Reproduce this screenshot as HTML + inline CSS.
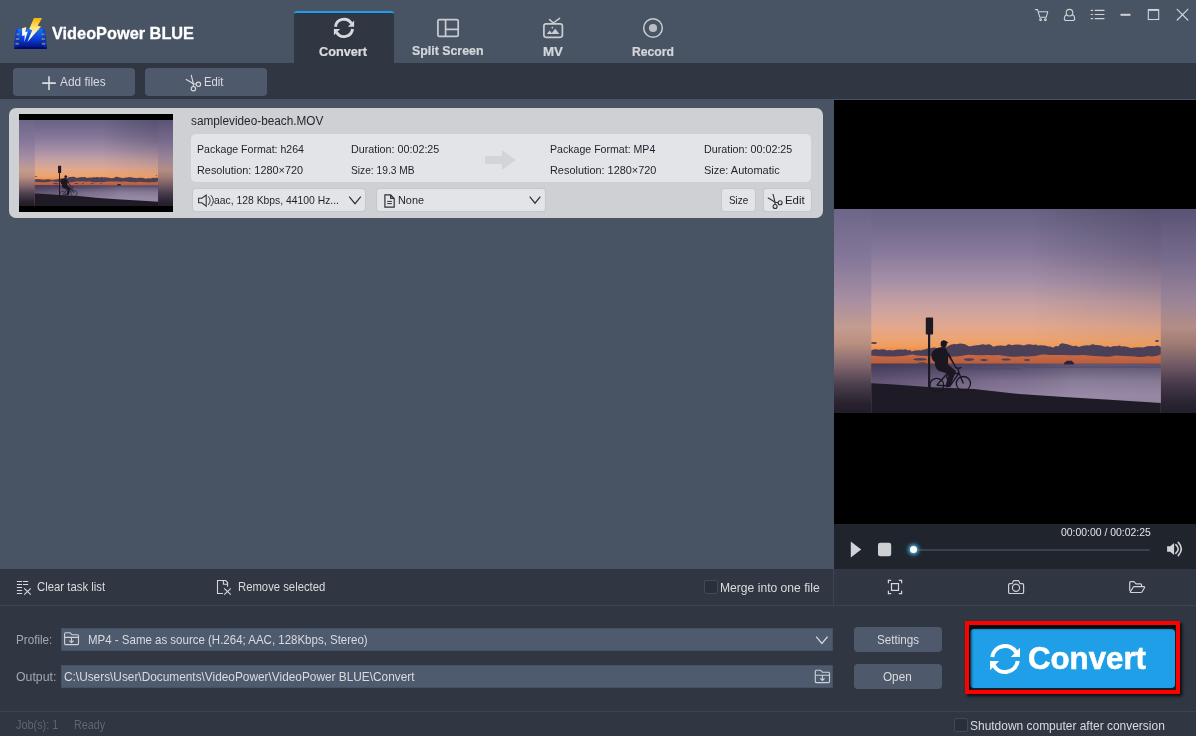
<!DOCTYPE html>
<html lang="en">
<head>
<meta charset="utf-8">
<title>VideoPower BLUE</title>
<style>
html,body{margin:0;padding:0;background:#303742;}
body{width:1196px;height:736px;overflow:hidden;font-family:"Liberation Sans",sans-serif;}
#app{position:relative;width:1196px;height:736px;overflow:hidden;background:#303742;}
.abs,.t,svg.i{position:absolute;}
.t{white-space:pre;transform-origin:0 50%;display:block;}
.grp{position:static;}
svg.i{overflow:visible;}
/* header */
#header{left:0;top:0;width:1196px;height:63px;background:#485363;}
#tab-active{left:294px;top:11px;width:100px;height:52px;background:#303742;border-top:2px solid #1e9fe8;border-radius:3px 3px 0 0;box-sizing:border-box;}
/* toolbar */
#toolbar{left:0;top:63px;width:1196px;height:36px;background:#303742;}
.tbtn{height:28px;width:122px;top:68px;background:#4e5a6c;border-radius:4px;}
/* list */
#list{left:0;top:99px;width:1196px;height:470px;background:#485363;}
#card{left:9px;top:108px;width:814px;height:110px;background:#cfd0d4;border-radius:7px;}
#thumb{left:19px;top:114px;width:154px;height:98px;background:#000;}
#info{left:191px;top:134px;width:620px;height:48px;background:#e3e4e8;border-radius:5px;}
.cbtn{top:189px;height:22px;background:#e3e4e8;border-radius:3px;box-shadow:0 0 0 1px rgba(190,192,198,.55);}
/* preview */
#preview{left:834px;top:100px;width:362px;height:424px;background:#000;}
#player{left:834px;top:524px;width:362px;height:45px;background:#1f242d;}
#track{left:913px;top:548.5px;width:237px;height:2px;background:#3a414c;border-radius:1px;}
#knob{left:909.7px;top:545.8px;width:7px;height:7px;border-radius:50%;background:#fff;box-shadow:0 0 3px 2px rgba(70,160,205,.85),0 0 6px 3px rgba(50,130,175,.3);}
/* bottom */
#bar1{left:0;top:569px;width:1196px;height:36px;background:#303742;border-bottom:1px solid #3b4451;}
#vsep{left:833px;top:569px;width:1px;height:36px;background:#3a4452;}
#bar2{left:0;top:606px;width:1196px;height:105px;background:#303742;border-bottom:1px solid #3b4451;}
#status{left:0;top:712px;width:1196px;height:24px;background:#303742;}
.chk{width:12px;height:12px;background:#2a303a;border:1px solid #414a58;border-radius:2px;}
.inp{left:60.5px;width:772.5px;height:23px;background:#4e5a6d;box-shadow:inset 0 0 0 1px #465162;}
.bbtn{left:854px;width:88px;height:25px;background:#4e5a6c;border-radius:4px;}
#hl{left:965px;top:621px;width:207px;height:65px;border:4px solid #ff0000;box-shadow:2px 2px 3px rgba(0,0,0,.8);background:#1b1f26;}
#hl-in{left:969px;top:625px;width:207px;height:65px;box-shadow:inset 2px 3px 3px rgba(0,0,0,.9);pointer-events:none;}
#convert{left:970px;top:629px;width:205px;height:59px;background:#1e9fe8;border-radius:4px;}
</style>
</head>
<body>
<svg width="0" height="0" style="position:absolute" aria-hidden="true">
  <defs>
    <linearGradient id="gSky" x1="0" y1="0" x2="0" y2="1">
      <stop offset="0" stop-color="#6a6386"/>
      <stop offset="0.055" stop-color="#6f6889"/>
      <stop offset="0.2" stop-color="#857799"/>
      <stop offset="0.35" stop-color="#a58fa7"/>
      <stop offset="0.47" stop-color="#c7a1a2"/>
      <stop offset="0.574" stop-color="#e1a88f"/>
      <stop offset="0.645" stop-color="#eda36e"/>
      <stop offset="0.675" stop-color="#f19b59"/>
      <stop offset="0.70" stop-color="#e6864a"/>
      <stop offset="0.72" stop-color="#c96842"/>
      <stop offset="0.76" stop-color="#b65d3c"/>
      <stop offset="1" stop-color="#b65d3c"/>
    </linearGradient>
    <linearGradient id="gShade" x1="0" y1="0" x2="1" y2="0">
      <stop offset="0" stop-color="#000" stop-opacity="0"/>
      <stop offset="0.55" stop-color="#000" stop-opacity="0"/>
      <stop offset="1" stop-color="#1a1430" stop-opacity="0.22"/>
    </linearGradient>
    <linearGradient id="gSea" x1="0" y1="0" x2="0" y2="1">
      <stop offset="0" stop-color="#4f4563"/>
      <stop offset="0.12" stop-color="#5f5474"/>
      <stop offset="0.35" stop-color="#7f718f"/>
      <stop offset="0.65" stop-color="#9081a0"/>
      <stop offset="1" stop-color="#86778f"/>
    </linearGradient>
    <linearGradient id="gSeaX" x1="0" y1="0" x2="1" y2="0">
      <stop offset="0" stop-color="#2c2440" stop-opacity="0.38"/>
      <stop offset="0.45" stop-color="#2c2440" stop-opacity="0.04"/>
      <stop offset="0.7" stop-color="#fff" stop-opacity="0.08"/>
      <stop offset="1" stop-color="#fff" stop-opacity="0.06"/>
    </linearGradient>
    <linearGradient id="gSideL" x1="0" y1="0" x2="0" y2="1">
      <stop offset="0" stop-color="#6d6688"/>
      <stop offset="0.25" stop-color="#85789a"/>
      <stop offset="0.45" stop-color="#a88fa2"/>
      <stop offset="0.58" stop-color="#c49c90"/>
      <stop offset="0.66" stop-color="#b98f80"/>
      <stop offset="0.76" stop-color="#86696f"/>
      <stop offset="0.86" stop-color="#4c3f4e"/>
      <stop offset="0.95" stop-color="#29232f"/>
      <stop offset="1" stop-color="#211c28"/>
    </linearGradient>
    <linearGradient id="gSideR" x1="0" y1="0" x2="0" y2="1">
      <stop offset="0" stop-color="#5a5375"/>
      <stop offset="0.25" stop-color="#786c8d"/>
      <stop offset="0.45" stop-color="#9b8498"/>
      <stop offset="0.58" stop-color="#b38d86"/>
      <stop offset="0.66" stop-color="#a07c74"/>
      <stop offset="0.76" stop-color="#735b65"/>
      <stop offset="0.86" stop-color="#45394a"/>
      <stop offset="0.95" stop-color="#2a2432"/>
      <stop offset="1" stop-color="#231e2b"/>
    </linearGradient>
    <linearGradient id="gFade" x1="0" y1="0" x2="0" y2="1"><stop offset="0" stop-color="#fff"/><stop offset="0.35" stop-color="#ddd"/><stop offset="1" stop-color="#000"/></linearGradient>
    <mask id="mFade" maskUnits="userSpaceOnUse" x="0" y="0" width="362" height="204"><rect x="0" y="0" width="362" height="150" fill="url(#gFade)"/></mask>
    <filter id="fSoft" x="-5%" y="-20%" width="110%" height="140%"><feGaussianBlur stdDeviation="0.7"/></filter>
    <symbol id="scene" viewBox="0 0 362 204" preserveAspectRatio="none">
      <rect x="0" y="0" width="38" height="204" fill="url(#gSideL)"/>
      <rect x="326" y="0" width="36" height="204" fill="url(#gSideR)"/>
      <!-- sharp centre -->
      <rect x="37.3" y="0" width="289.5" height="204" fill="url(#gSky)"/>
      <rect x="37.3" y="0" width="289.5" height="150" fill="url(#gShade)" mask="url(#mFade)"/>
      <!-- sea -->
      <rect x="37.3" y="154.6" width="289.5" height="49.4" fill="url(#gSea)"/>
      <rect x="37.3" y="154.6" width="289.5" height="49.4" fill="url(#gSeaX)"/>
      <rect x="37.3" y="158.8" width="150" height="1.6" fill="#4f4566" opacity="0.55"/>
      <rect x="190" y="157.2" width="136.8" height="1.8" fill="#4f4566" opacity="0.5"/>
      <!-- clouds -->
      <g fill="#4b3f59" filter="url(#fSoft)">
        <path d="M37.3 143.0 L37.3 141.5 Q41.2 139.3 45.1 140.8 Q49.1 139.6 53.0 141.4 Q55.6 140.3 58.3 141.6 Q63.8 140.3 69.3 140.7 Q71.5 139.6 73.7 141.6 Q75.6 140.0 77.6 142.4 Q82.4 141.0 87.3 141.4 Q89.1 140.1 90.9 140.5 Q93.6 138.9 96.2 139.2 Q100.2 137.6 104.1 139.5 Q108.4 136.9 112.6 138.1 Q117.5 134.3 122.4 135.3 Q128.9 133.0 135.3 137.6 Q140.5 136.0 145.6 136.0 Q148.7 134.8 151.8 135.9 Q155.5 134.0 159.1 137.7 Q165.4 135.7 171.7 136.9 Q174.5 133.8 177.2 136.2 Q183.6 134.5 190.0 136.4 Q194.8 134.3 199.5 136.1 Q201.7 134.7 203.8 136.4 Q209.2 135.6 214.5 137.5 Q216.8 137.3 219.0 138.7 Q221.6 136.3 224.2 137.4 Q226.8 133.4 229.5 134.6 Q234.3 135.5 239.1 137.2 Q241.9 136.2 244.6 138.0 Q250.2 135.8 255.8 136.5 Q258.5 134.2 261.3 136.0 Q266.1 135.4 270.9 137.8 Q273.6 136.5 276.4 138.2 Q279.7 136.5 283.0 137.3 Q285.2 135.6 287.4 137.4 Q292.0 136.7 296.6 139.1 Q302.9 137.7 309.2 138.5 Q315.1 136.4 320.9 137.3 Q323.9 135.4 326.8 138.0 L326.8 145.4 Q320.3 148.5 313.8 147.1 Q307.2 148.9 300.6 147.5 Q290.8 146.8 281.0 146.4 Q275.7 148.1 270.3 147.5 Q259.7 147.3 249.1 146.0 Q239.3 146.6 229.5 146.1 Q218.8 146.2 208.0 145.6 Q198.5 148.3 189.0 147.3 Q181.8 148.0 174.6 147.4 Q169.4 146.9 164.3 146.1 Q158.8 146.6 153.3 145.9 Q143.8 146.5 134.2 145.8 Q122.1 148.6 109.9 147.6 Q99.4 147.2 88.9 146.7 Q83.6 146.9 78.3 145.5 Q67.7 147.8 57.1 147.5 Q47.0 147.7 37.3 146.5 L37.3 147.4 Z"/>
        <ellipse cx="86" cy="150.300" rx="7" ry="1.300"/>
        <ellipse cx="135" cy="150.600" rx="5" ry="1.300"/>
        <ellipse cx="150" cy="151" rx="3.500" ry="1"/>
        <ellipse cx="172" cy="150.500" rx="4.500" ry="1.100"/>
        <ellipse cx="193" cy="151" rx="3" ry=".9"/>
        <ellipse cx="40" cy="134" rx="3" ry="1"/>
        <ellipse cx="323" cy="132" rx="2" ry="1"/>
      </g>
      <!-- ships -->
      <path d="M230 155.600 L230.600 153 L232 153 L232.300 151.800 L238 151.800 L238.500 153 L239.500 153 L240 155.600 Z" fill="#2b2236"/>
      <path d="M83.500 154.600 L85 153.400 L91 153.400 L93 154.600 Z" fill="#43364c"/>
      <!-- beach -->
      <path d="M37.3 174.200 L60 175.500 L94 178 L140 180 L180 184.500 L230 188 L280 191 L326.800 194 L326.800 204 L37.3 204 Z" fill="#1e1a26"/>
      <!-- sign + pole -->
      <rect x="94" y="124" width="2.2" height="54" fill="#1d1925"/>
      <rect x="91.800" y="108.600" width="7.300" height="17" rx="0.800" fill="#1d1925"/>
      <!-- bike -->
      <g fill="none" stroke="#1b1722" stroke-width="1.300">
        <circle cx="102.800" cy="176.200" r="6.900"/>
        <circle cx="129.400" cy="174.600" r="7.100"/>
        <path d="M102.800 176.200 L112 166 L125 164 L129.400 174.600 M112 166 L116 177 L125 164 M125 164 L124 159.500 L121 158 M124 159.500 L127.500 158.400 M102.800 176.200 L116 177" stroke-width="1.400"/>
      </g>
      <!-- rider -->
      <g fill="#1b1722">
        <ellipse cx="109.700" cy="134.900" rx="3.100" ry="3.400"/>
        <path d="M107.500 132.400 Q110 130.400 112.600 132.600 L114.700 133.900 L111.800 134.500 Z"/>
        <path d="M101.500 140 Q105.500 137.300 110.500 138.600 Q113.600 140.500 114.200 146 L114 155.500 L118 158.800 L122 162.200 L120 167.500 L116 177.500 L112.500 178.500 L111.500 176.200 L114.500 166.500 L111.500 164 L104.500 161.800 Q100.500 158.500 100.800 153 Q96.800 150.500 97.500 145 Q98.300 141.500 101.500 140 Z"/>
        <path d="M113.500 146 L121 158.200 L122 157.600 L114.600 143.500 Z"/>
      </g>
    </symbol>
  </defs>
</svg>

<div id="app">

  <header class="grp">
    <div id="header" class="abs"></div>
    <svg class="i" id="logo" style="left:12px;top:14px" width="38" height="38" viewBox="12 14 38 38">
      <defs>
        <linearGradient id="gFilm" x1="0" y1="0" x2="0" y2="1"><stop offset="0" stop-color="#1c74f5"/><stop offset="0.45" stop-color="#0d43dc"/><stop offset="1" stop-color="#020a72"/></linearGradient>
        <linearGradient id="gBolt" x1="0" y1="0" x2="0" y2="1"><stop offset="0" stop-color="#f5b400"/><stop offset="0.4" stop-color="#ffe27a"/><stop offset="0.75" stop-color="#fffbe8"/><stop offset="1" stop-color="#ffffff"/></linearGradient>
        <linearGradient id="gBolt2" x1="0" y1="0" x2="0" y2="1"><stop offset="0" stop-color="#ffe9a8"/><stop offset="0.5" stop-color="#ffffff"/><stop offset="1" stop-color="#ffffff"/></linearGradient>
      </defs>
      <path d="M15.800 28.700 L44.900 28.700 L46.900 49 L14.100 49 Z" fill="url(#gFilm)"/>
      <path d="M15.800 28.700 L18.200 28.700 L17.200 49 L14.100 49 Z M42.500 28.700 L44.900 28.700 L46.900 49 L43.800 49 Z" fill="#0a2fb0" opacity=".55"/>
      <g fill="#6f7b90">
        <rect x="16.300" y="33.200" width="3.200" height="2" rx=".5"/><rect x="15.900" y="37.900" width="3.300" height="2" rx=".5"/><rect x="15.500" y="42.700" width="3.400" height="2.100" rx=".5"/>
        <rect x="41.300" y="33.200" width="3.200" height="2" rx=".5"/><rect x="41.600" y="37.900" width="3.300" height="2" rx=".5"/><rect x="41.900" y="42.700" width="3.400" height="2.100" rx=".5"/>
      </g>
      <path d="M14.100 47.300 H46.900 V49 H14.100 Z" fill="#01064f" opacity=".6"/>
      <path d="M33.900 18 L42.100 18 L37.700 25.700 L41.100 26.400 L27.400 41.900 L32.200 30.300 L29.200 29 Z" fill="url(#gBolt)"/>
      <path d="M22 28.300 L26.300 26.900 L25.400 32 L27.800 31.600 L24.400 42 L24.700 35.300 L22.200 36 Z" fill="url(#gBolt2)"/>
    </svg>
    <h1 class="grp" style="margin:0"><span class="t" style="left:51.8px;top:24.20px;font-size:17px;line-height:20px;font-weight:bold;color:#ffffff;transform:scaleX(0.9595);-webkit-text-stroke:0.31px #ffffff">VideoPower BLUE</span></h1>
    <nav class="grp">
      <div id="tab-active" class="abs"></div>
      <div class="grp tab">
        <svg class="i" style="left:332px;top:16px" width="24" height="24" viewBox="332 16 24 24"><path d="M335.42 26.8 A8.65 8.65 0 0 1 351.49 23.57 M352.58 29 A8.65 8.65 0 0 1 336.51 32.22" fill="none" stroke="#d8d9dc" stroke-width="2.9"/><path d="M354.1 20.6 V26.8 H347.9 Z M333.9 29 V35.2 L340.1 29 Z" fill="#d8d9dc"/></svg>
        <span class="t" style="left:319.3px;top:43.50px;font-size:13px;line-height:16px;font-weight:bold;color:#dcdde0;transform:scaleX(0.9771);-webkit-text-stroke:0.23px #dcdde0">Convert</span>
      </div>
      <div class="grp tab">
        <svg class="i" style="left:436px;top:18px" width="24" height="20" viewBox="436 18 24 20" fill="none" stroke="#c9ccd1" stroke-width="1.700">
          <rect x="437.900" y="19.700" width="20.300" height="16.700" rx="1.500"/>
          <path d="M445.600 19.700 V36.400 M445.600 29.300 H458.200"/>
        </svg>
        <span class="t" style="left:412.3px;top:42.50px;font-size:13px;line-height:16px;font-weight:bold;color:#d4d6da;transform:scaleX(0.9515);-webkit-text-stroke:0.23px #d4d6da">Split Screen</span>
      </div>
      <div class="grp tab">
        <svg class="i" style="left:542px;top:16px" width="24" height="24" viewBox="542 16 24 24" fill="none" stroke="#c9ccd1" stroke-width="1.700" stroke-linecap="round">
          <rect x="543.900" y="23.800" width="18.500" height="13.500" rx="2.200"/>
          <path d="M553.300 23 L549.600 19.600 M553.300 23 L559.600 18.300" stroke-width="1.500"/>
          <path d="M546.800 34 L549.600 30.400 L551.800 33 L555.200 28.800 L559.400 34 Z" fill="#c9ccd1" stroke="none"/>
          <circle cx="552.400" cy="27.600" r=".9" fill="#c9ccd1" stroke="none"/>
        </svg>
        <span class="t" style="left:542.8px;top:43.50px;font-size:13px;line-height:16px;font-weight:bold;color:#d4d6da;transform:scaleX(1.0256);-webkit-text-stroke:0.23px #d4d6da">MV</span>
      </div>
      <div class="grp tab">
        <svg class="i" style="left:642px;top:17px" width="22" height="22" viewBox="642 17 22 22">
          <circle cx="653" cy="28" r="9.300" fill="none" stroke="#c9ccd1" stroke-width="1.500"/>
          <circle cx="653" cy="28" r="4.100" fill="#babdc4"/>
        </svg>
        <span class="t" style="left:631.6px;top:43.50px;font-size:13px;line-height:16px;font-weight:bold;color:#d4d6da;transform:scaleX(0.9376);-webkit-text-stroke:0.23px #d4d6da">Record</span>
      </div>
    </nav>
    <div class="grp" id="winctl">
      <svg class="i" style="left:1030px;top:6px" width="162" height="18" viewBox="1030 6 162 18" fill="none" stroke="#d0d2d6" stroke-width="1.100" stroke-linecap="round" stroke-linejoin="round">
        <!-- cart -->
        <path d="M1035.400 9.600 L1037.600 9.600 L1039.800 17.300 L1046.200 17.300 L1047.700 11.800 L1038.300 11.800"/>
        <circle cx="1040.600" cy="19.700" r=".9"/><circle cx="1045.400" cy="19.700" r=".9"/>
        <!-- user -->
        <circle cx="1069.500" cy="12.700" r="3.300"/>
        <path d="M1066.700 14.600 Q1064.300 16 1064.300 18.400 Q1064.300 20.500 1066.400 20.500 L1072.600 20.500 Q1074.700 20.500 1074.700 18.400 Q1074.700 16 1072.300 14.600"/>
        <!-- list -->
        <path d="M1095.200 10.400 H1104 M1095.200 14.500 H1104 M1095.200 18.700 H1104" stroke-width="1.200"/>
        <path d="M1091.200 10.400 H1092.600 M1091.200 14.500 H1092.600 M1091.200 18.700 H1092.600" stroke-width="1.200"/>
        <!-- minimize -->
        <path d="M1120.500 14.800 H1130.500" stroke-width="2" stroke-linecap="butt"/>
        <!-- maximize -->
        <rect x="1148.300" y="9.800" width="10.400" height="9.700" stroke-linejoin="miter"/>
        <path d="M1148.300 9.900 H1158.700" stroke-width="1.900" stroke-linecap="butt"/>
        <!-- close -->
        <path d="M1177.200 9.300 L1187.800 20 M1187.800 9.300 L1177.200 20" stroke-width="1.200"/>
      </svg>
    </div>
  </header>

  <section class="grp" id="tools">
    <div id="toolbar" class="abs"></div>
    <div class="grp">
      <div class="abs tbtn" style="left:13px"></div>
      <svg class="i" style="left:41px;top:75px" width="16" height="16" viewBox="41 75 16 16" stroke="#dcdde0" stroke-width="1.600" fill="none"><path d="M42.200 83.100 H55.800 M49 76.200 V90"/></svg>
      <span class="t" style="left:60.4px;top:74.00px;font-size:12.7px;line-height:16px;font-weight:normal;color:#d9dbde;transform:scaleX(0.9369)">Add files</span>
    </div>
    <div class="grp">
      <div class="abs tbtn" style="left:145px"></div>
      <svg class="i" style="left:184px;top:73px" width="20" height="20" viewBox="184 73 20 20" stroke="#dcdde0" stroke-width="1.100" fill="none" stroke-linecap="round">
        <path d="M191.300 75.400 Q192.500 80 193.300 83.700 L193.400 86.400"/>
        <path d="M186.200 79.400 Q190 81.400 193.300 83.700 L196.200 84.200"/>
        <circle cx="193.400" cy="88.700" r="2.200"/><circle cx="198.400" cy="84.300" r="2.200"/>
      </svg>
      <span class="t" style="left:203.7px;top:74.00px;font-size:12.7px;line-height:16px;font-weight:normal;color:#d9dbde;transform:scaleX(0.8869)">Edit</span>
    </div>
  </section>

  <main class="grp">
    <div id="list" class="abs"></div>
    <article class="grp">
      <div id="card" class="abs"></div>
      <div id="thumb" class="abs"></div>
      <svg class="i" style="left:19px;top:120px" width="154" height="86"><use href="#scene" width="154" height="86"/></svg>
      <span class="t" style="left:191.4px;top:113.00px;font-size:12px;line-height:16px;font-weight:normal;color:#211f2d;transform:scaleX(0.9827)">samplevideo-beach.MOV</span>
      <div id="info" class="abs"></div>
      <span class="t" style="left:197.0px;top:141.20px;font-size:11.3px;line-height:16px;font-weight:normal;color:#211f2d;transform:scaleX(0.9362)">Package Format: h264</span><span class="t" style="left:197.0px;top:161.90px;font-size:11.3px;line-height:16px;font-weight:normal;color:#211f2d;transform:scaleX(0.9616)">Resolution: 1280×720</span><span class="t" style="left:350.9px;top:141.20px;font-size:11.3px;line-height:16px;font-weight:normal;color:#211f2d;transform:scaleX(0.9499)">Duration: 00:02:25</span><span class="t" style="left:350.9px;top:161.90px;font-size:11.3px;line-height:16px;font-weight:normal;color:#211f2d;transform:scaleX(0.9043)">Size: 19.3 MB</span>
      <svg class="i" style="left:484px;top:149px" width="34" height="22" viewBox="484 149 34 22"><path d="M485 156.100 H501.900 V150.200 L516.200 160 L501.900 169.800 V164 H485 Z" fill="#d3d4d8"/></svg>
      <span class="t" style="left:549.7px;top:141.20px;font-size:11.3px;line-height:16px;font-weight:normal;color:#211f2d;transform:scaleX(0.9369)">Package Format: MP4</span><span class="t" style="left:549.7px;top:161.90px;font-size:11.3px;line-height:16px;font-weight:normal;color:#211f2d;transform:scaleX(0.9652)">Resolution: 1280×720</span><span class="t" style="left:703.7px;top:141.20px;font-size:11.3px;line-height:16px;font-weight:normal;color:#211f2d;transform:scaleX(0.9499)">Duration: 00:02:25</span><span class="t" style="left:703.7px;top:161.90px;font-size:11.3px;line-height:16px;font-weight:normal;color:#211f2d;transform:scaleX(0.9723)">Size: Automatic</span>
      <div class="grp">
        <div class="abs cbtn" style="left:193px;width:172px"></div>
        <svg class="i" style="left:196px;top:192px" width="20" height="16" viewBox="196 192 20 16" fill="none" stroke="#2e313b" stroke-width="1.100" stroke-linejoin="miter">
          <path d="M198.600 198.300 H201.800 L206.200 195 V206.200 L201.800 202.800 H198.600 Z"/>
          <path d="M208.200 196.300 Q212 200.600 208.200 204.900 M210.800 195.100 Q216 200.600 210.800 206.100" stroke-width="1"/>
        </svg>
        <span class="t" style="left:214.4px;top:191.80px;font-size:11.3px;line-height:16px;font-weight:normal;color:#211f2d;transform:scaleX(0.9172)">aac, 128 Kbps, 44100 Hz...</span>
        <svg class="i" style="left:347px;top:194px" width="16" height="12" viewBox="347 194 16 12" fill="none" stroke="#2e313b" stroke-width="1.200"><path d="M349.200 196.700 L355 203.700 L360.800 196.700"/></svg>
      </div>
      <div class="grp">
        <div class="abs cbtn" style="left:377px;width:168px"></div>
        <svg class="i" style="left:382px;top:192px" width="16" height="18" viewBox="382 192 16 18" fill="none" stroke="#2e313b" stroke-width="1.200" stroke-linejoin="miter">
          <path d="M384.900 194.800 H390.600 L394.200 198.400 V207.200 H384.900 Z M390.600 194.800 V198.400 H394.200"/>
          <path d="M387.200 201.400 H391.900 M387.200 203.600 H391.900" stroke-width="1"/>
        </svg>
        <span class="t" style="left:397.7px;top:191.80px;font-size:11.3px;line-height:16px;font-weight:normal;color:#211f2d;transform:scaleX(0.9624)">None</span>
        <svg class="i" style="left:527px;top:194px" width="16" height="12" viewBox="527 194 16 12" fill="none" stroke="#2e313b" stroke-width="1.200"><path d="M529.700 196.600 L535 203.200 L540.300 196.600"/></svg>
      </div>
      <div class="grp">
        <div class="abs cbtn" style="left:722px;width:32.500px"></div>
        <span class="t" style="left:728.9px;top:191.80px;font-size:11.3px;line-height:16px;font-weight:normal;color:#211f2d;transform:scaleX(0.8779)">Size</span>
      </div>
      <div class="grp">
        <div class="abs cbtn" style="left:764px;width:47px"></div>
        <svg class="i" style="left:766px;top:192px" width="20" height="18" viewBox="766 192 20 18" stroke="#2e313b" stroke-width="1.100" fill="none" stroke-linecap="round">
          <path d="M773 194.200 Q774.200 198.600 775 202.200 L775.100 204.500"/>
          <path d="M768.200 198 Q771.800 200 775 202.200 L778 202.700"/>
          <circle cx="775.100" cy="206.500" r="2"/><circle cx="780.100" cy="202.800" r="2"/>
        </svg>
        <span class="t" style="left:784.5px;top:191.80px;font-size:11.3px;line-height:16px;font-weight:normal;color:#211f2d;transform:scaleX(1.0119)">Edit</span>
      </div>
    </article>
  </main>

  <aside class="grp">
    <div id="preview" class="abs"></div>
    <svg class="i" style="left:834px;top:209px" width="362" height="204"><use href="#scene" width="362" height="204"/></svg>
    <div id="player" class="abs"></div>
    <svg class="i" style="left:848px;top:540px" width="46" height="20" viewBox="848 540 46 20">
      <path d="M850.800 541.600 L861.200 549.400 L850.800 557.400 Z" fill="#d2d3d6"/>
      <rect x="878" y="542.800" width="13.200" height="13.400" rx="2.200" fill="#cfd0d4"/>
    </svg>
    <div id="track" class="abs"></div>
    <div id="knob" class="abs"></div>
    <span class="t" style="left:1061.1px;top:524.40px;font-size:11px;line-height:16px;font-weight:normal;color:#e4e5e7;transform:scaleX(0.9471)">00:00:00 / 00:02:25</span>
    <svg class="i" style="left:1165px;top:540px" width="20" height="18" viewBox="1165 540 20 18" fill="#d2d3d6">
      <path d="M1167.100 546.200 H1170.200 L1174.100 542.900 V555 L1170.200 551.700 H1167.100 Z"/>
      <path d="M1175.800 544.700 Q1180.700 549 1175.800 553.300 M1178.300 542.400 Q1184.300 549 1178.300 555.600" fill="none" stroke="#d2d3d6" stroke-width="1.600" stroke-linecap="round"/>
    </svg>
  </aside>

  <section class="grp" id="actions">
    <div id="bar1" class="abs"></div>
    <div id="vsep" class="abs"></div>
    <svg class="i" style="left:15px;top:579px" width="18" height="18" viewBox="15 579 18 18" stroke="#d6d8dc" stroke-width="1" fill="none">
      <path d="M16.900 581.500 H22.100 M23 581.500 H28.200 M16.900 584.500 H22.100 M23 584.500 H28.200 M16.900 587.500 H22.100 M16.900 590.500 H22.100 M16.900 593.500 H22.100"/>
      <path d="M24.200 588.300 L30.800 594.700 M30.800 588.300 L24.200 594.700" stroke-width="1.100"/>
    </svg>
    <span class="t" style="left:36.6px;top:579.00px;font-size:12.7px;line-height:16px;font-weight:normal;color:#d9dbde;transform:scaleX(0.8955)">Clear task list</span>
    <svg class="i" style="left:215px;top:578px" width="18" height="18" viewBox="215 578 18 18" stroke="#d6d8dc" stroke-width="1.100" fill="none">
      <path d="M223 593.500 H217.500 V580.500 H225.600 L227.600 582.500 V586.800 M223.400 580.500 V584.200 H227.600"/>
      <path d="M224.200 588.300 L230.800 594.700 M230.800 588.300 L224.200 594.700"/>
    </svg>
    <span class="t" style="left:237.6px;top:579.00px;font-size:12.7px;line-height:16px;font-weight:normal;color:#d9dbde;transform:scaleX(0.8905)">Remove selected</span>
    <div class="abs chk" style="left:704px;top:580px"></div>
    <span class="t" style="left:719.6px;top:580.00px;font-size:12.7px;line-height:16px;font-weight:normal;color:#d9dbde;transform:scaleX(0.9551)">Merge into one file</span>
    <svg class="i" style="left:886px;top:578px" width="18" height="18" viewBox="886 578 18 18" stroke="#d6d8dc" stroke-width="1.200" fill="none">
      <path d="M888.400 583.200 V580.400 H891.200 M898.800 580.400 H901.600 V583.200 M901.600 590.800 V593.600 H898.800 M891.200 593.600 H888.400 V590.800"/>
      <rect x="891.500" y="583.600" width="7" height="6.800"/>
    </svg>
    <svg class="i" style="left:1006px;top:578px" width="20" height="18" viewBox="1006 578 20 18" stroke="#d0d2d6" stroke-width="1.200" fill="none" stroke-linejoin="round">
      <path d="M1008.600 585 Q1008.600 583.700 1009.900 583.700 H1011.600 Q1012.300 583.700 1012.600 582.900 L1013 581.600 Q1013.400 580.600 1014.400 580.600 H1017.800 Q1018.800 580.600 1019.200 581.600 L1019.600 582.900 Q1019.900 583.700 1020.600 583.700 H1022.300 Q1023.600 583.700 1023.600 585 V592.200 Q1023.600 593.500 1022.300 593.500 H1009.900 Q1008.600 593.500 1008.600 592.200 Z"/>
      <circle cx="1016" cy="587.800" r="3.600"/>
    </svg>
    <svg class="i" style="left:1127px;top:578px" width="20" height="18" viewBox="1127 578 20 18" stroke="#d0d2d6" stroke-width="1.200" fill="none" stroke-linejoin="round" stroke-linecap="round">
      <path d="M1130.400 591.200 L1129.700 590 V582.600 Q1129.700 581.700 1130.600 581.700 H1134 L1136 583.900 H1140.400 Q1141.600 583.900 1141.600 585.100 V586.500"/>
      <path d="M1130.400 591.800 L1133.200 587.200 Q1133.600 586.600 1134.400 586.600 H1143.800 Q1145 586.600 1144.500 587.700 L1142.100 591.700 Q1141.600 592.500 1140.800 592.500 H1131.200 Q1130.200 592.500 1130.400 591.800 Z"/>
    </svg>
  </section>

  <section class="grp" id="output">
    <div id="bar2" class="abs"></div>
    <span class="t" style="left:16.3px;top:631.80px;font-size:12.7px;line-height:16px;font-weight:normal;color:#a3a8b0;transform:scaleX(0.9190)">Profile:</span>
    <div class="abs inp" style="top:628px"></div>
    <svg class="i" style="left:63px;top:631px" width="18" height="16" viewBox="63 631 18 16" stroke="#d0d2d6" stroke-width="1.100" fill="none" stroke-linejoin="round">
      <path d="M64.600 633.700 Q64.600 632.700 65.600 632.700 H69.900 L71.900 634.700 H77.500 Q78.500 634.700 78.500 635.700 V643.600 Q78.500 644.600 77.500 644.600 H65.600 Q64.600 644.600 64.600 643.600 Z"/>
      <path d="M64.600 637.400 H78.500 M71.500 637.400 V642.600 M69.400 640.600 L71.500 642.700 L73.600 640.600"/>
    </svg>
    <span class="t" style="left:87.7px;top:632.00px;font-size:12.7px;line-height:16px;font-weight:normal;color:#d9dbde;transform:scaleX(0.9055)">MP4 - Same as source (H.264; AAC, 128Kbps, Stereo)</span>
    <svg class="i" style="left:814px;top:634px" width="16" height="12" viewBox="814 634 16 12" fill="none" stroke="#d6d8dc" stroke-width="1.300"><path d="M816.200 636.600 L821.900 643.400 L827.600 636.600"/></svg>
    <span class="t" style="left:16.3px;top:668.80px;font-size:12.7px;line-height:16px;font-weight:normal;color:#a3a8b0;transform:scaleX(0.9706)">Output:</span>
    <div class="abs inp" style="top:665px"></div>
    <span class="t" style="left:64.0px;top:668.80px;font-size:12.7px;line-height:16px;font-weight:normal;color:#d9dbde;transform:scaleX(0.9337)">C:\Users\User\Documents\VideoPower\VideoPower BLUE\Convert</span>
    <svg class="i" style="left:813px;top:668px" width="18" height="16" viewBox="813 668 18 16" stroke="#d0d2d6" stroke-width="1.100" fill="none" stroke-linejoin="round">
      <path d="M815.300 671.300 Q815.300 670.300 816.300 670.300 H820.600 L822.600 672.300 H828.500 Q829.500 672.300 829.500 673.300 V681.600 Q829.500 682.600 828.500 682.600 H816.300 Q815.300 682.600 815.300 681.600 Z"/>
      <path d="M815.300 675.200 H829.500 M822.400 675.200 V680.400 M820.300 678.400 L822.400 680.500 L824.500 678.400"/>
    </svg>
    <div class="abs bbtn" style="top:627px"></div><span class="t" style="left:877.4px;top:632.00px;font-size:12.7px;line-height:16px;font-weight:normal;color:#d9dbde;transform:scaleX(0.9205)">Settings</span>
    <div class="abs bbtn" style="top:664px"></div><span class="t" style="left:882.5px;top:669.00px;font-size:12.7px;line-height:16px;font-weight:normal;color:#d9dbde;transform:scaleX(0.9244)">Open</span>
    <div id="hl" class="abs"></div>
    <div id="convert" class="abs"></div>
    <div id="hl-in" class="abs"></div>
    <svg class="i" style="left:988px;top:642px" width="34" height="34" viewBox="988 642 34 34"><path d="M992.21 656.95 A12.95 12.95 0 0 1 1016.22 652.52 M1017.79 661.05 A12.95 12.95 0 0 1 993.78 665.48" fill="none" stroke="#ffffff" stroke-width="4.1"/><path d="M1020 647.85 V656.95 H1010.9 Z M990 661.05 V670.15 L999.1 661.05 Z" fill="#ffffff"/></svg>
    <span class="t" style="left:1028.0px;top:639.20px;font-size:31.5px;line-height:38px;font-weight:bold;color:#ffffff;transform:scaleX(0.9913);-webkit-text-stroke:0.57px #ffffff">Convert</span>
  </section>

  <footer class="grp">
    <div id="status" class="abs"></div>
    <span class="t" style="left:16.3px;top:717.00px;font-size:12.3px;line-height:16px;font-weight:normal;color:#5d6672;transform:scaleX(0.8841)">Job(s): 1</span><span class="t" style="left:73.7px;top:717.00px;font-size:12.3px;line-height:16px;font-weight:normal;color:#5d6672;transform:scaleX(0.8749)">Ready</span>
    <div class="abs chk" style="left:954px;top:717.500px"></div>
    <span class="t" style="left:970.4px;top:717.60px;font-size:12.7px;line-height:16px;font-weight:normal;color:#d9dbde;transform:scaleX(0.9427)">Shutdown computer after conversion</span>
  </footer>
</div>
</body>
</html>
